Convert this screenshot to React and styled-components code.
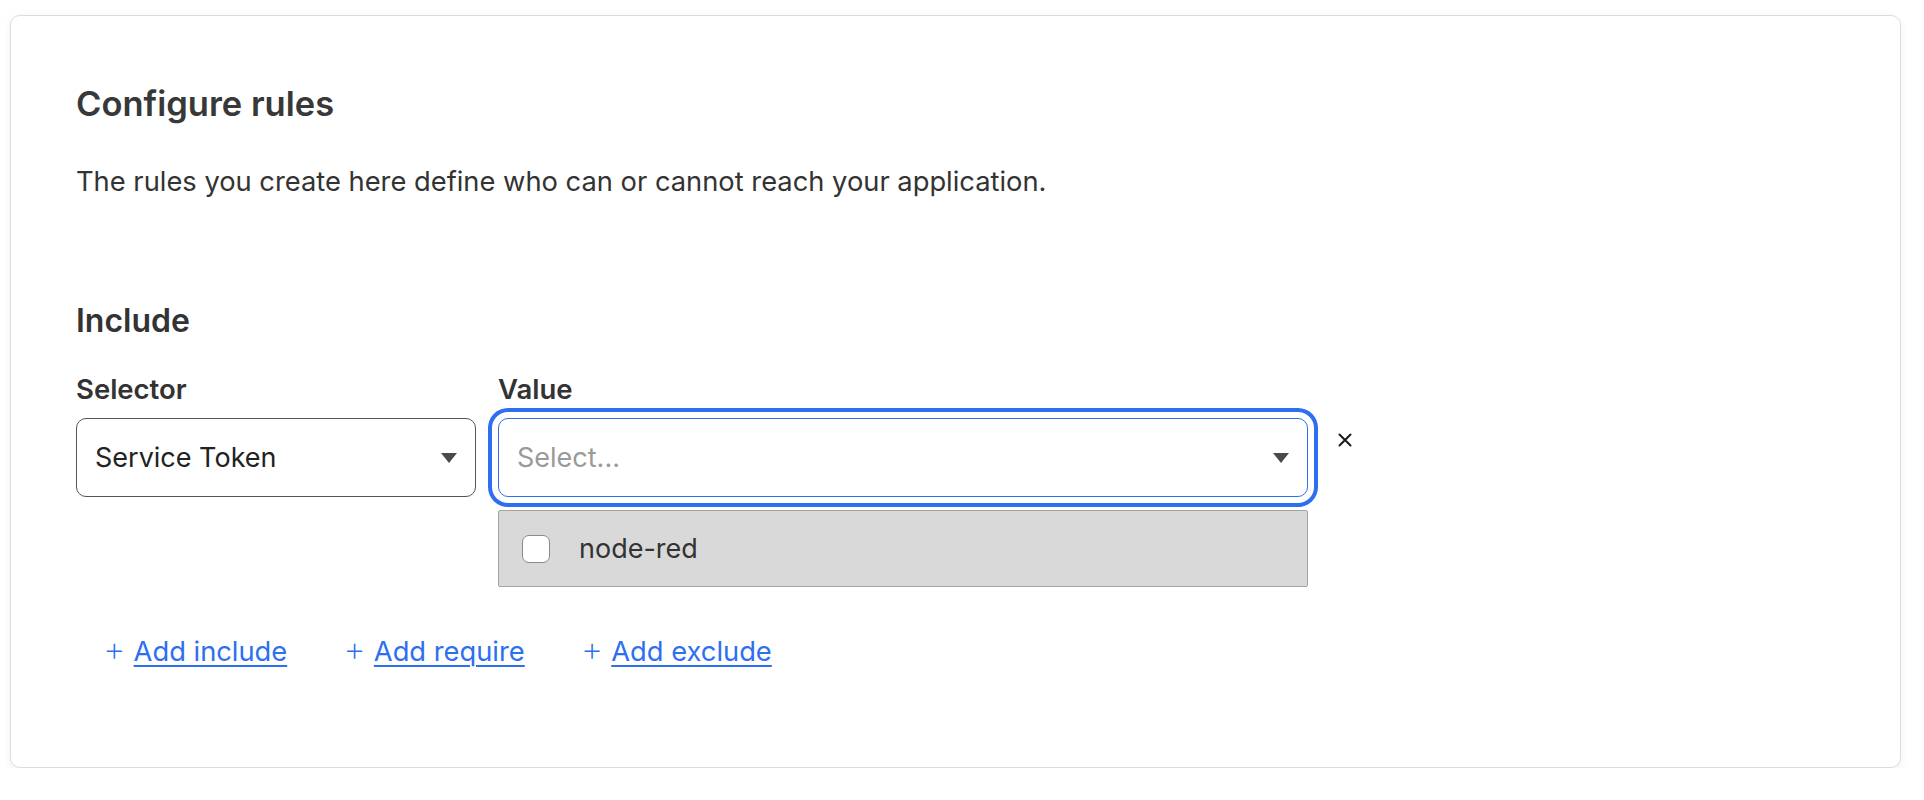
import React from 'react';
import styled, { createGlobalStyle } from 'styled-components';

const GlobalStyle = createGlobalStyle`
    body {
        margin: 0;
        background: #fff;
        font-family: Inter, "Noto Sans", "Liberation Sans", sans-serif;
        color: #333;
    }
`;

const Card = styled.div`
    width: 1891px;
    box-sizing: border-box;
    margin: 15px 0 0 10px;
    min-height: 753px;
    border: 1px solid #dcdcdc;
    border-radius: 10px;
    box-shadow: 0 3px 10px rgba(0, 0, 0, 0.06);
    background: #fff;
    padding: 67px 65px 0 65px;
`;

const Title = styled.h2`
    margin: 0;
    font-size: 34.5px;
    line-height: 42px;
    font-weight: 600;
    color: #383838;
`;

const Description = styled.p`
    margin: 40px 0 0;
    font-size: 27.3px;
    line-height: 34px;
    color: #333;
`;

const SectionTitle = styled.h3`
    margin: 103px 0 0;
    font-size: 32px;
    line-height: 38px;
    font-weight: 600;
    color: #333;
`;

const RuleRow = styled.div`
    display: flex;
    align-items: flex-start;
    gap: 22px;
    margin-top: 33px;
`;

const Field = styled.div`
    display: flex;
    flex-direction: column;
    width: ${props => props.width}px;
    position: relative;
`;

const Label = styled.label`
    font-size: 27.5px;
    line-height: 32px;
    font-weight: 600;
    color: #333;
    margin-bottom: 13px;
`;

const SelectBox = styled.div`
    height: 79px;
    box-sizing: border-box;
    display: flex;
    align-items: center;
    justify-content: space-between;
    padding: 0 18px 0 18px;
    border: 1px solid ${props => (props.focused ? '#2d6ff0' : '#555')};
    border-radius: 10px;
    background: #fff;
    font-size: 27px;
    color: ${props => (props.placeholder ? '#9a9a9a' : '#222')};
    ${props => (props.focused ? 'box-shadow: 0 0 0 6px #fff, 0 0 0 10px #2d6ff0;' : '')}
`;

const Arrow = styled.span`
    width: 0;
    height: 0;
    border-left: 8px solid transparent;
    border-right: 8px solid transparent;
    border-top: 10px solid #4a4a4a;
`;

const Menu = styled.div`
    position: absolute;
    top: 137px;
    left: 0;
    right: 0;
    height: 77px;
    box-sizing: border-box;
    background: #d9d9d9;
    border: 1px solid #a3a3a3;
    border-radius: 2px;
    display: flex;
    align-items: center;
    padding-left: 23px;
    font-size: 27px;
    color: #333;
`;

const Checkbox = styled.span`
    width: 28px;
    height: 28px;
    box-sizing: border-box;
    border: 1px solid #8a8a8a;
    border-radius: 7px;
    background: #fff;
    margin-right: 29px;
`;

const RemoveButton = styled.button`
    margin-top: 60px;
    margin-left: 8px;
    width: 16px;
    height: 16px;
    padding: 0;
    border: none;
    background: none;
    cursor: pointer;
    display: flex;
`;

const LinkRow = styled.div`
    display: flex;
    gap: 56px;
    margin-top: 134px;
    padding-left: 27px;
`;

const AddLink = styled.div`
    display: flex;
    align-items: baseline;
    gap: 8px;
    font-size: 27.3px;
    line-height: 34px;
    color: #2d6ff0;
`;

const Plus = styled.span`
    font-weight: 200;
    font-size: 35px;
`;

const LinkText = styled.a`
    color: #2d6ff0;
    text-decoration: underline;
    text-decoration-thickness: 2px;
    text-underline-offset: 4px;
`;

const links = ['Add include', 'Add require', 'Add exclude'];

const App = () => {
    return (
        <>
            <GlobalStyle />
            <Card>
                <Title>Configure rules</Title>
                <Description>The rules you create here define who can or cannot reach your application.</Description>
                <SectionTitle>Include</SectionTitle>
                <RuleRow>
                    <Field width={400}>
                        <Label>Selector</Label>
                        <SelectBox>
                            Service Token
                            <Arrow />
                        </SelectBox>
                    </Field>
                    <Field width={810}>
                        <Label>Value</Label>
                        <SelectBox focused placeholder>
                            Select...
                            <Arrow />
                        </SelectBox>
                        <Menu>
                            <Checkbox />
                            node-red
                        </Menu>
                    </Field>
                    <RemoveButton aria-label="remove">
                        <svg width="14" height="14" viewBox="0 0 14 14">
                            <path d="M1.5 1.5 L12.5 12.5 M12.5 1.5 L1.5 12.5" stroke="#1a1a1a" strokeWidth="2" strokeLinecap="round" />
                        </svg>
                    </RemoveButton>
                </RuleRow>
                <LinkRow>
                    {links.map(l => (
                        <AddLink key={l}>
                            <Plus>+</Plus>
                            <LinkText href="#">{l}</LinkText>
                        </AddLink>
                    ))}
                </LinkRow>
            </Card>
        </>
    );
};

export default App;
